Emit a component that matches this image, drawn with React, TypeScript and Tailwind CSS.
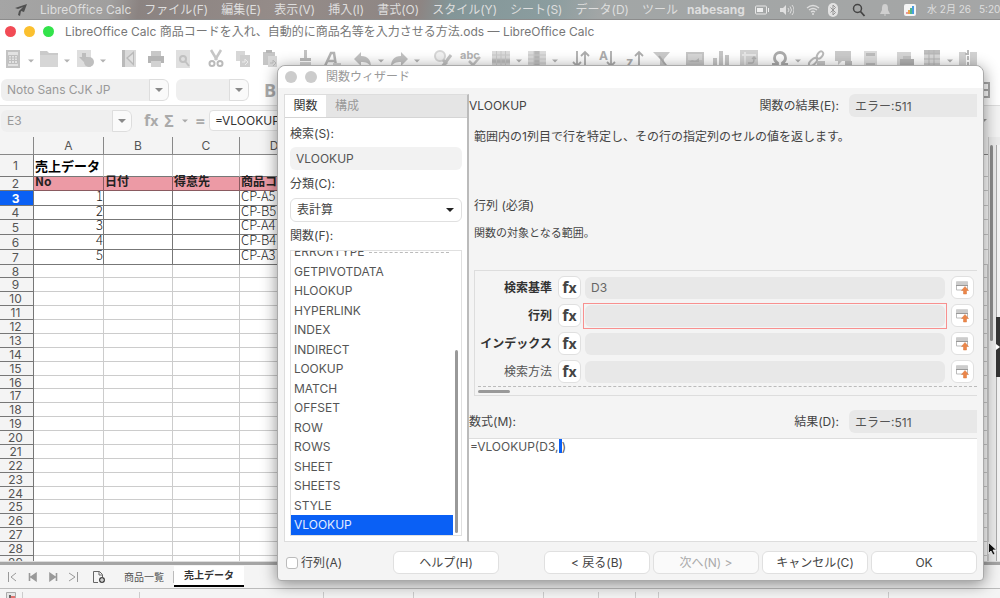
import { FC, ReactNode } from "react";
import clsx from "clsx";

const menus = ["ファイル(F)", "編集(E)", "表示(V)", "挿入(I)", "書式(O)", "スタイル(Y)", "シート(S)", "データ(D)", "ツール"];

const functionNames = [
    "ERRORTYPE", "GETPIVOTDATA", "HLOOKUP", "HYPERLINK", "INDEX", "INDIRECT", "LOOKUP", "MATCH",
    "OFFSET", "ROW", "ROWS", "SHEET", "SHEETS", "STYLE", "VLOOKUP",
];

const args = [
    { id: "arg-key", label: "検索基準", value: "D3", required: true },
    { id: "arg-matrix", label: "行列", value: "", required: true, active: true },
    { id: "arg-index", label: "インデックス", value: "", required: true },
    { id: "arg-sorted", label: "検索方法", value: "" },
];

const products = ["CP-A5", "CP-B5", "CP-A4", "CP-B4", "CP-A3"];

const icons: Record<string, ReactNode> = {
    new: <><path d="M2 0h14v18H2z" fill="#b5b5b5" /><path d="M4 2h10v14H4z" fill="#dcdcdc" /><path d="M4.500 5.500h9v8h-9zM4.500 8h9M4.500 10.500h9M7.500 5.500v8M10.500 5.500v8" fill="none" stroke="#b0b0b0" /></>,
    open: <><path d="M0 3V1h7l2 2h9v14H0z" fill="#bdbdbd" /><path d="M0 5h18v12H0z" fill="#cdcdcd" /></>,
    save: <><path d="M1 0h14v17H1z" fill="#d6d6d6" /><path d="M6 3h4v4h3l-5 5-5-5h3z" fill="#adadad" /><circle cx="13" cy="12" r="5" fill="#b0b0b0" /></>,
    edit: <><path d="M2 0h14v17H2z" fill="#d2d2d2" /><path d="M2 0h3v17H2zM14 1L6 8l8 8z" fill="#aaa" /><path d="M13 4L8 8l5 5z" fill="#dadada" /></>,
    print: <><path d="M4 1h10v5H4z" fill="#bbb" /><path d="M1 6h16v7H1z" fill="#a3a3a3" /><path d="M4 11h10v6H4z" fill="#c8c8c8" /></>,
    preview: <><path d="M2 0h14v18H2z" fill="#d8d8d8" /><circle cx="9" cy="9" r="3" fill="none" stroke="#b2b2b2" strokeWidth="2" /><path d="M11 11l4 5" stroke="#b2b2b2" strokeWidth="2" /></>,
    cut: <><path d="M4 0l6 10M14 0L8 10" stroke="#b8b8b8" strokeWidth="2.500" /><circle cx="5" cy="13.500" r="2.500" fill="none" stroke="#aaa" strokeWidth="2" /><circle cx="13" cy="13.500" r="2.500" fill="none" stroke="#aaa" strokeWidth="2" /></>,
    copy: <><path d="M2 1h9v10H2z" fill="#cecece" /><path d="M6 5h10v12H6z" fill="#c3c3c3" /><path d="M8 12h3V9l3 3-3 3" fill="none" stroke="#e6e6e6" /></>,
    paste: <><path d="M2 2h12v13H2z" fill="#b9b9b9" /><path d="M5 0h6v3H5z" fill="#a5a5a5" /><path d="M7 6h9v11H7z" fill="#cfcfcf" /><path d="M9 13h3v-3l3 3-3 3" fill="none" stroke="#a8a8a8" /></>,
    brush: <><path d="M8 0h3v8H8z" fill="#b5b5b5" /><path d="M4 8h11v3H4z" fill="#aaa" /><path d="M4 12h11v6H4z" fill="#c8c8c8" /></>,
    clear: <><path d="M2 16L8 3h3l2 13M5 11h7" fill="none" stroke="#a3a3a3" strokeWidth="2.500" /><path d="M10 13h8v5h-8z" fill="#c9c9c9" /></>,
    undo: <path d="M0 9l7-7v4c7 0 10 4 10 11-2-4-5-5-10-5v4z" fill="#b4b4b4" />,
    redo: <path d="M18 9l-7-7v4C4 6 1 10 1 17c2-4 5-5 10-5v4z" fill="#b4b4b4" />,
    find: <><circle cx="6" cy="6" r="5" fill="#eee" stroke="#ccc" strokeWidth="2" /><path d="M9 10l4 4M17 5L8 17" stroke="#b5b5b5" strokeWidth="3" /></>,
    spell: <><text x="-1" y="9" fontSize="11" fontWeight="700" fill="#a0a0a0">abc</text><path d="M8 11l4 4 7-8" fill="none" stroke="#b5b5b5" strokeWidth="2.500" /></>,
    rows: <><path d="M0 1h18v16H0z" fill="#d4d4d4" /><path d="M0 9h18v4H0z" fill="#aaa" /><path d="M0 5h18M0 9h18M0 13h18M4.500 1v16M9 1v16M13.500 1v16" stroke="#bbb" /></>,
    columns: <><path d="M0 1h18v16H0z" fill="#d4d4d4" /><path d="M6 1h5v16H6z" fill="#aaa" /><path d="M0 5h18M0 9h18M0 13h18M6 1v16M11.500 1v16" stroke="#bbb" /></>,
    sort: <path d="M5 1v15M1 12l4 4 4-4M13 17V2M9 6l4-4 4 4" fill="none" stroke="#999" strokeWidth="1.800" />,
    sortAsc: <><text x="0" y="10" fontSize="12" fontWeight="700" fill="#999">A</text><path d="M12 1v15M8 12l4 4 4-4" fill="none" stroke="#999" strokeWidth="1.800" /></>,
    sortDesc: <><text x="0" y="17" fontSize="13" fontWeight="700" fill="#999">z</text><path d="M13 17V2M9 6l4-4 4 4" fill="none" stroke="#999" strokeWidth="1.800" /></>,
    filter: <><path d="M0 2h17l-6 7v9H7V9z" fill="#bdbdbd" /><path d="M6 6l9 12" stroke="#999" strokeWidth="2" /></>,
    image: <><path d="M0 2h18v14H0z" fill="#b8b8b8" /><path d="M2 4h14v6H2z" fill="#cecece" /><path d="M3 12l3-2 3 1 4-3v4z" fill="#a5a5a5" /></>,
    chart: <path d="M0 8h4v10H0zM6 1h4v17H6zM12 5h4v13h-4z" fill="#b8b8b8" />,
    pivot: <><path d="M0 0h18v18H0z" fill="#c8c8c8" /><path d="M2 5h14M5 2v14" stroke="#e0e0e0" strokeWidth="2" /><path d="M8 13h4c2 0 2-2 2-5M12 9l2-2 2 2" fill="none" stroke="#a0a0a0" strokeWidth="1.500" /></>,
    omega: <path d="M1 14.500h5.500V13C4 11.500 3.500 10 3.500 8a5.500 5.500 0 0 1 11 0c0 2-.5 3.500-3 5v1.500H17" fill="none" stroke="#989898" strokeWidth="2.800" />,
    link: <><ellipse cx="13" cy="5" rx="2.500" ry="4" transform="rotate(35 13 5)" fill="none" stroke="#aaa" strokeWidth="2" /><ellipse cx="6" cy="12" rx="2.500" ry="5" transform="rotate(45 6 12)" fill="none" stroke="#aaa" strokeWidth="2" /><path d="M10 11h8v6h-8z" fill="#b9b9b9" /></>,
    comment: <><path d="M1 1h16v10H8l-4 4v-4H1z" fill="#bfbfbf" /><path d="M11 11h7v6h-7z" fill="#adadad" /></>,
    header: <><path d="M3 1h13v17H3z" fill="#d4d4d4" /><path d="M5 3h9v3H5zM5 13h9v4H5z" fill="#acacac" /></>,
    printArea: <><path d="M1 2h14v14H1z" fill="#ccc" /><path d="M4 9h14v6H4z" fill="#a0a0a0" /><path d="M7 6h8v3H7z" fill="#b5b5b5" /></>,
    freeze: <><path d="M1 0h16v18H1z" fill="#d2d2d2" /><path d="M1 0h16v4H1z" fill="#b0b0b0" /><path d="M1 4h16M1 9h16M1 14h16M6 0v18M11 0v18" stroke="#a5a5a5" /></>,
    split: <><path d="M0 2h7v16H0zM11 2h7v16h-7z" fill="#c8c8c8" /><path d="M9 0v18M6 4h6" stroke="#aaa" strokeWidth="2" strokeDasharray="4 2" /></>,
};

const toolGroups = [
    { space: "ml-1", items: ["new+", "open+", "save+"] },
    { space: "ml-2", items: ["edit", "print", "preview"] },
    { space: "ml-1.5", items: ["cut", "copy", "paste"] },
    { space: "ml-2", items: ["brush", "clear"] },
    { space: "ml-1", items: ["undo+", "redo+"] },
    { space: "ml-2", items: ["find", "spell"] },
    { space: "ml-1", items: ["rows+", "columns+"] },
    { space: "ml-2", items: ["sort", "sortAsc", "sortDesc", "filter"] },
    { space: "ml-1.5", items: ["image", "chart", "pivot"] },
    { space: "ml-1", items: ["omega+", "link", "comment", "header"] },
    { space: "ml-2", items: ["printArea", "freeze+", "split"] },
];

const Caret: FC<{ className?: string }> = ({ className }) => (
    <svg viewBox="0 0 8 4" className={clsx("h-1 fill-current", className ?? "w-2")}><path d="M0 0h8L4 4z" /></svg>
);

const Fx: FC<{ className?: string }> = ({ className }) => (
    <span className={clsx("font-['Open_Sans'] leading-4 font-bold", className)}>
        f<span className="text-sm leading-4">x</span>
    </span>
);

const MenuBar = () => (
    <div className="flex h-5 shrink-0 items-center border-b border-[#8c8c8c] bg-[linear-gradient(100deg,#a5a5a5_0%,#a09f9e_11%,#8b8381_14%,#958c89_28%,#8d8583_42%,#839698_45%,#8b9d9f_55%,#a2a6a6_60%,#a5a6a6_100%)] text-xs text-[#dedede]">
        <svg viewBox="0 0 14 14" className="ml-3.5 h-3.5 w-3.5 shrink-0 fill-[#505050]">
            <path d="M1 5L13 1l-3 8-3-1-1 5-2-1 1-4 4-4-5 2z" />
        </svg>
        <nav className="ml-3 flex min-w-0 flex-1 gap-[13px] overflow-hidden whitespace-nowrap">
            <a href="#app">LibreOffice Calc</a>
            {menus.map((menu) => <a key={menu} href="#menu">{menu}</a>)}
        </nav>
        <div className="ml-2 flex w-[313px] shrink-0 items-center overflow-hidden whitespace-nowrap">
            <span className="w-[68px] shrink-0 font-bold">nabesang</span>
            <svg viewBox="0 0 14 10" className="h-2.5 w-3.5 shrink-0"><rect x=".5" y="1" width="11" height="8" rx="1" fill="none" stroke="#e6e6e6" /><path d="M2 3h6v4H2zM13 3h1v4h-1z" fill="#eee" /></svg>
            <svg viewBox="0 0 14 12" className="ml-[11px] h-3 w-3.5 shrink-0"><path d="M0 4h3l3-3v10L3 8H0z" fill="#e0e0e0" /><path d="M8 4q2 2 0 4M10 2.500q3 3.500 0 7M12 1q4 5 0 10" fill="none" stroke="#ddd" /></svg>
            <svg viewBox="0 0 14 11" className="ml-3 h-[11px] w-3.5 shrink-0"><path d="M1 4q6-5 12 0M3 6q4-3 8 0M5 8q2-1.500 4 0" fill="none" stroke="#ddd" strokeWidth="1.300" /><circle cx="7" cy="10" r="1" fill="#ddd" /></svg>
            <svg viewBox="0 0 10 14" className="ml-2 h-3.5 w-2.5 shrink-0"><rect width="10" height="14" rx="5" fill="#e2e2e2" /><path d="M2.500 4.500l5 5L5 12V2l2.500 2.500-5 5" fill="none" stroke="#959595" /></svg>
            <svg viewBox="0 0 14 14" className="ml-3.5 h-3.5 w-3.5 shrink-0"><circle cx="5.500" cy="5.500" r="4" fill="none" stroke="#444" strokeWidth="1.500" /><path d="M8.500 8.500l4 4.500" stroke="#444" strokeWidth="1.800" /></svg>
            <svg viewBox="0 0 10 12" className="ml-3.5 h-3 w-2.5 shrink-0 fill-[#cfcfcf]"><path d="M5 0c3 0 3 3 3 6l2 4H0l2-4c0-3 0-6 3-6zM4 10.500h2v1H4z" /></svg>
            <svg viewBox="0 0 12 12" className="ml-3.5 h-3 w-3 shrink-0"><rect width="12" height="12" rx="2" fill="#f5f5f5" /><path d="M2 8h2v2H2z" fill="#e99" /><path d="M4 6h2v4H4z" fill="#e9a44a" /><path d="M6 4h2v6H6z" fill="#4db88a" /><path d="M8 2h2v8H8z" fill="#4a9be0" /></svg>
            <span className="ml-[11px] text-[10px]">水 2月 26</span>
            <span className="ml-2 text-[10px]">5:20 午</span>
        </div>
    </div>
);

const Toolbar = () => (
    <div className="flex h-[32px] shrink-0 items-center overflow-hidden">
        {toolGroups.map((group, i) => (
            <div key={i} className={clsx("flex shrink-0 opacity-80", group.space)}>
                {group.items.map((item) => {
                    const name = item.replace("+", "");
                    return (
                        <button key={item} aria-label={name} className={clsx("flex items-center", !item.includes("+") && "pr-[9px]")}>
                            <svg viewBox="0 0 18 18" className="h-[18px] w-[18px] overflow-visible">{icons[name]}</svg>
                            {item.includes("+") && <span className="flex w-[18px] justify-center pt-1 text-[#a0a0a0]"><Caret className="w-1.5" /></span>}
                        </button>
                    );
                })}
            </div>
        ))}
    </div>
);

interface ComboProps {
    label: string;
    value: string;
    width: string;
}

const Combo: FC<ComboProps> = ({ label, value, width }) => (
    <div className={clsx("flex h-[22px] shrink-0 overflow-hidden rounded-md bg-[#efefef]", width)}>
        <input aria-label={label} defaultValue={value} className="min-w-0 flex-1 bg-transparent pl-1.5 text-xs text-[#999] outline-none" />
        <button aria-label={label + "▼"} className="flex w-5 items-center justify-center rounded-r-md border border-[#ddd] bg-[#fafafa] text-[#8a8a8a]"><Caret /></button>
    </div>
);

const RowHead: FC<{ n: number; selected?: boolean }> = ({ n, selected }) => (
    <th className={clsx("border-r border-b border-[#777] pt-px pr-0.5 text-xs leading-2.5", selected ? "bg-[#0a60f5] font-bold text-white" : "bg-[#f4f4f4] font-normal text-[#555]")}>{n}</th>
);

const Sheet = () => (
    <div className="flex min-h-0 flex-1 overflow-hidden border-b border-[#ddd] bg-white">
        <div className="min-w-0 flex-1 overflow-hidden">
            <table className="w-full table-fixed border-separate border-spacing-0">
                <colgroup>
                    <col className="w-[34px]" /><col className="w-[70px]" /><col className="w-[69px]" /><col className="w-[67px]" /><col className="w-[69px]" /><col />
                </colgroup>
                <thead>
                    <tr className="h-[18px] bg-[#f4f4f4] text-xs leading-3 text-[#555]">
                        <th className="border-r border-b border-[#888]"></th>
                        {["A", "B", "C", "D"].map((c) => <th key={c} className="border-r border-b border-[#888] p-0 font-normal">{c}</th>)}
                        <th className="border-b border-[#888] p-0"></th>
                    </tr>
                </thead>
                <tbody>
                    <tr className="h-[22px]">
                        <RowHead n={1} />
                        <td className="border-r border-b border-r-[#ccc] border-b-[#777] p-0 pl-px font-['Noto_Sans_CJK_JP'] text-[13px] leading-4 font-bold whitespace-nowrap text-black">売上データ</td>
                        <td className="border-r border-b border-r-[#ccc] border-b-[#777]"></td>
                        <td className="border-r border-b border-r-[#ccc] border-b-[#777]"></td>
                        <td className="border-r border-b border-r-[#ccc] border-b-[#777]"></td>
                        <td className="border-b border-[#ccc]"></td>
                    </tr>
                    <tr className="h-[14px]">
                        <RowHead n={2} />
                        {["No", "日付", "得意先", "商品コード"].map((h) => (
                            <td key={h} className="border-r border-b border-[#8a5a60] bg-[#ec9aa5] p-0 pb-1 pl-px align-top font-['Noto_Sans_CJK_JP'] text-xs leading-2 font-bold whitespace-nowrap text-[#222]">{h}</td>
                        ))}
                        <td className="border-b border-[#ccc] p-0"></td>
                    </tr>
                    {products.map((code, i) => (
                        <tr key={code} className={i === 1 ? "h-[14px]" : "h-[15px]"}>
                            <RowHead n={i + 3} selected={i === 0} />
                            <td className="border-r border-b border-[#777] p-0 text-right align-top font-['Noto_Sans_CJK_JP'] text-[13px] leading-2.5 font-light text-[#222]">{i + 1}</td>
                            <td className="border-r border-b border-[#777]"></td>
                            <td className="border-r border-b border-[#777]"></td>
                            <td className="border-r border-b border-[#777] p-0 pl-px align-top font-['Noto_Sans_CJK_JP'] text-[13px] leading-2.5 font-light text-[#222]">{code}</td>
                            <td className="border-b border-[#ccc] p-0"></td>
                        </tr>
                    ))}
                    {Array.from({ length: 22 }, (_, i) => i + 8).map((n) => (
                        <tr key={n} className={n % 8 === 0 ? "h-[13px]" : "h-[14px]"}>
                            <RowHead n={n} />
                            {[0, 1, 2, 3, 4].map((c) => <td key={c} className="border-r border-b border-[#ccc] p-0"></td>)}
                        </tr>
                    ))}
                </tbody>
            </table>
        </div>
        <div className="flex w-3 shrink-0 justify-between border-l border-[#ccc] bg-[#ececec] pt-2">
            <div className="ml-px h-[196px] w-[3px] rounded-full bg-[#8c8c8c]" />
            <div className="w-1 border-l border-[#aaa] bg-[#f4f4f4]" />
        </div>
    </div>
);

const SheetTabs = () => (
    <>
        <div className="h-[3px] shrink-0 bg-[#a5a5a5]" />
        <div className="flex h-6 shrink-0 items-center border-b border-[#bbb] bg-[#f4f4f4] text-[10px] text-[#555]">
            <svg viewBox="0 0 72 10" className="ml-2 h-2.5 w-[72px] fill-[#999] stroke-[#999]">
                <path d="M.5 0v10M8 1L3 5l5 4" fill="none" />
                <path d="M21.500 1v8M28 1.500v7L23 5z" strokeWidth="1.600" />
                <path d="M48.500 1v8M42 1.500v7L47 5z" strokeWidth="1.600" />
                <path d="M61 1l6 4-6 4M69.500 0v10" fill="none" />
            </svg>
            <button aria-label="シートを追加" className="ml-[13px]">
                <svg viewBox="0 0 12 12" className="h-3 w-3"><path d="M5 11.500H.5V.5h6l3 3V6M6 .5V4h3" fill="none" stroke="#666" /><circle cx="9" cy="9" r="3" fill="#444" /><path d="M7 9h4M9 7v4" stroke="#fff" /></svg>
            </button>
            <button className="ml-2.5 border-r border-[#bbb] px-[9px] leading-3">商品一覧</button>
            <button className="h-[21px] border-b-2 border-black bg-white px-2.5 font-bold text-[#333]">売上データ</button>
        </div>
        <div className="flex h-[9px] shrink-0 items-end overflow-hidden bg-[#f4f4f4]">
            <div className="flex h-1.5 w-[23px] justify-center border-r border-[#ccc]">
                <svg viewBox="0 0 10 6" className="h-1.5 w-2.5"><path d="M.5 6V.5h9V6" fill="#e6e6e6" stroke="#aaa" /><path d="M3 3h2v3H3z" fill="#666" /><path d="M5 4h4v2H5z" fill="#e0736f" /></svg>
            </div>
            <div className="h-1.5 w-[117px] border-r border-[#ccc]" />
            <div className="h-1.5 w-[184px] border-r border-[#ccc]" />
            <div className="h-1.5 w-[90px] border-r border-[#ccc]" />
            <div className="h-1.5 w-[130px] border-r border-[#ccc]" />
            <div className="h-1.5 w-[55px] border-r border-[#ccc]" />
            <div className="h-1.5 w-[37px] border-r border-[#ccc]" />
            <div className="h-1.5 w-[23px] border-r border-[#ccc]" />
            <div className="h-1.5 w-[230px] border-r border-[#ccc]" />
        </div>
    </>
);

const FunctionPanel = () => (
    <div className="flex w-[185px] shrink-0 flex-col border border-r-2 border-[#ddd] border-r-[#bbb] bg-white">
        <div className="flex h-[23px] border-b border-[#d5d5d5] bg-[#e5e5e5]">
            <button className="w-[41px] bg-white text-[#333]">関数</button>
            <button className="px-[9px] text-[#999]">構成</button>
        </div>
        <div className="flex min-h-0 flex-1 flex-col px-[5px] pt-1.5 pb-[5px]">
            <label htmlFor="search" className="leading-5">検索(S):</label>
            <input id="search" defaultValue="VLOOKUP" className="mt-[3px] h-[23px] w-full rounded-md bg-[#f2f2f2] px-1.5 text-[#555] outline-none" />
            <label htmlFor="category" className="mt-1 leading-5">分類(C):</label>
            <div className="relative mt-1">
                <select id="category" className="h-6 w-full appearance-none rounded-md border border-[#e0e0e0] bg-white px-1.5">
                    <option>表計算</option>
                </select>
                <Caret className="pointer-events-none absolute top-2.5 right-2 w-2 text-[#222]" />
            </div>
            <span id="list-label" className="mt-1 leading-5">関数(F):</span>
            <div className="mt-1 flex min-h-0 flex-1 overflow-hidden border border-[#e0e0e0]">
                <ul role="listbox" aria-labelledby="list-label" className="flex min-w-0 flex-1 flex-col justify-end">
                    {functionNames.map((name, i) => (
                        <li
                            key={name}
                            role="option"
                            aria-selected={name === "VLOOKUP"}
                            className={clsx("flex shrink-0 items-center pl-[3px]", i % 2 ? "h-[19px]" : "h-5", name === "VLOOKUP" ? "bg-[#0a60f5] text-[#e4ecff]" : "text-[#555]")}
                        >
                            {name}
                            {i === 0 && <span className="mr-1 ml-1 flex-1 border-t border-dashed border-[#bbb]" />}
                        </li>
                    ))}
                </ul>
                <div className="flex w-2 flex-col justify-end pb-0.5 pl-0.5">
                    <div className="h-[183px] w-[3px] rounded-full bg-[#999]" />
                </div>
            </div>
        </div>
    </div>
);

const ShrinkIcon = () => (
    <svg viewBox="0 0 14 14" className="h-3.5 w-3.5">
        <path d="M.5 1h11v8H.5z" fill="#fff" stroke="#bbb" />
        <path d="M0 .5h12v4H0z" fill="#ccc" />
        <path d="M0 4.500h12" stroke="#999" />
        <path d="M9 5.500l3.500 4h-2V13h-3V9.500h-2z" fill="#ec8548" stroke="#d9793f" strokeWidth=".5" />
    </svg>
);

const Arguments = () => (
    <div className="ml-[5px] border border-r-0 border-[#ddd] pt-[5px] pb-0.5">
        <div className="flex flex-col gap-[5px]">
            {args.map((arg) => (
                <div key={arg.id} className="flex h-[23px] items-center pr-[3px]">
                    <label htmlFor={arg.id} className={clsx("w-[77px] shrink-0 text-right whitespace-nowrap", arg.required ? "font-bold text-[#333]" : "text-[#555]")}>{arg.label}</label>
                    <button aria-label={arg.label + " fx"} className="ml-1.5 flex h-[23px] w-[23px] shrink-0 items-center justify-center rounded-md border border-[#e0e0e0] bg-white text-[#444]"><Fx className="text-base" /></button>
                    <div className={clsx("ml-0.5 min-w-0 flex-1 border p-px", arg.active ? "border-[#f8908f]" : "border-transparent")}>
                        <input id={arg.id} defaultValue={arg.value} className="block h-[22px] w-full rounded-md bg-[#e8e8e8] px-1.5 text-[#666] outline-none" />
                    </div>
                    <button aria-label={arg.label + " 縮小"} className="ml-1 flex h-[23px] w-[23px] shrink-0 items-center justify-center rounded-md border border-[#e0e0e0] bg-white"><ShrinkIcon /></button>
                </div>
            ))}
        </div>
        <div className="mt-[3px] ml-[3px] border-t border-dashed border-[#bbb]" />
        <div className="mt-[3px] ml-[3px] h-[3px] w-8 rounded-full bg-[#999]" />
    </div>
);

const ResultField: FC<{ id: string; label: string }> = ({ id, label }) => (
    <>
        <label htmlFor={id} className="ml-auto">{label}</label>
        <input id={id} readOnly value="エラー:511" className="ml-2.5 h-[23px] w-32 rounded-l-md bg-[#e8e8e8] px-1.5 text-[#555] outline-none" />
    </>
);

const buttonStyle = "h-[23px] w-[106px] rounded-md border border-[#e0e0e0]";

const FunctionWizard = () => (
    <div role="dialog" aria-label="関数ウィザード" className="absolute top-[65px] right-4 left-[277px] rounded-t-lg rounded-b-sm border border-[#aaa] bg-[#f4f4f4] text-xs text-[#444] shadow-[0_3px_16px_rgba(0,0,0,0.45)]">
        <div className="flex h-[22px] items-center gap-2 rounded-t-lg bg-white pl-[7px] text-[#999]">
            <span className="h-3 w-3 rounded-full bg-[#ccc]" />
            <span className="h-3 w-3 rounded-full bg-[#ccc]" />
            <h2 className="ml-px">関数ウィザード</h2>
        </div>
        <div className="flex h-[454px] pt-1.5 pr-1.5 pl-1.5">
            <FunctionPanel />
            <div className="flex min-w-0 flex-1 flex-col">
                <div className="flex h-[23px] items-center">
                    <span>VLOOKUP</span>
                    <ResultField id="function-result" label="関数の結果(E):" />
                </div>
                <p className="mt-2.5 ml-[5px] h-[69px] leading-5">範囲内の1列目で行を特定し、その行の指定列のセルの値を返します。</p>
                <p className="ml-[5px] leading-5">行列 (必須)</p>
                <p className="mt-[7px] mb-[27px] ml-[5px] text-[11px] leading-5">関数の対象となる範囲。</p>
                <Arguments />
                <div className="mt-3.5 flex h-[23px] items-center">
                    <label htmlFor="formula">数式(M):</label>
                    <ResultField id="result" label="結果(D):" />
                </div>
                <div className="relative mt-[5px] min-h-0 flex-1">
                    <textarea id="formula" defaultValue="=VLOOKUP(D3, )" className="h-full w-full resize-none border-y border-[#ddd] bg-white pl-px leading-4 text-[#555] outline-none" />
                    <span className="absolute top-px left-[90px] h-3.5 w-[3px] bg-[#0a60f5]" />
                </div>
            </div>
        </div>
        <div className="flex items-center px-1.5 pt-[9px] pb-1.5 whitespace-nowrap">
            <div className="flex w-[109px] items-center gap-[3px] pl-0.5">
                <input id="array" type="checkbox" className="h-3 w-3 appearance-none rounded-[3px] border border-[#bbb] bg-white" />
                <label htmlFor="array">行列(A)</label>
            </div>
            <button className={clsx(buttonStyle, "bg-white")}>ヘルプ(H)</button>
            <div className="ml-auto flex gap-[3px]">
                <button className={clsx(buttonStyle, "bg-white")}>&lt; 戻る(B)</button>
                <button disabled className={clsx(buttonStyle, "bg-[#fafafa] text-[#aaa]")}>次へ(N) &gt;</button>
                <button className={clsx(buttonStyle, "bg-white")}>キャンセル(C)</button>
                <button className={clsx(buttonStyle, "bg-white")}>OK</button>
            </div>
        </div>
    </div>
);

export default function App() {
    return (
        <div className="relative flex h-screen flex-col overflow-hidden bg-white font-[Inter,'Noto_Sans_CJK_JP',sans-serif]">
            <MenuBar />
            <div className="flex h-[23px] shrink-0 items-center gap-2 pl-[5px]">
                <span className="h-[11px] w-[11px] rounded-full bg-[#f24b55]" />
                <span className="h-[11px] w-[11px] rounded-full bg-[#fbc02f]" />
                <span className="h-[11px] w-[11px] rounded-full bg-[#33e34b]" />
                <h1 className="ml-[3px] text-xs text-[#777]">LibreOffice Calc 商品コードを入れ、自動的に商品名等を入力させる方法.ods — LibreOffice Calc</h1>
            </div>
            <Toolbar />
            <div className="flex h-[31px] shrink-0 items-center gap-[7px] border-b border-[#ddd] pl-px">
                <Combo label="フォント名" value="Noto Sans CJK JP" width="w-[168px]" />
                <Combo label="フォントサイズ" value="" width="w-[73px]" />
                <button className="ml-2 font-['Open_Sans'] text-lg font-bold text-[#aaa]">B</button>
                <svg viewBox="0 0 16 16" className="mr-2.5 ml-auto h-4 w-4"><path d="M1 1h14v14H1zM1 8h14M8 1v14" fill="none" stroke="#aaa" strokeWidth="2" /></svg>
            </div>
            <div className="flex h-[31px] shrink-0 items-center bg-[#f4f4f4] pr-[13px] pb-0.5 pl-px">
                <Combo label="名前ボックス" value="E3" width="w-[131px]" />
                <Fx className="ml-3 text-base text-[#aaa]" />
                <span className="ml-1.5 font-['Open_Sans'] text-base leading-4 font-bold text-[#aaa]">Σ</span>
                <Caret className="ml-2 w-1.5 text-[#aaa]" />
                <span className="ml-2 font-['Open_Sans'] text-base leading-4 font-bold text-[#aaa]">=</span>
                <input aria-label="数式" defaultValue="=VLOOKUP(D3,)" className="ml-1 h-[21px] min-w-0 flex-1 rounded-sm border border-[#e0e0e0] bg-white pl-[5px] text-xs text-[#333]" />
                <Caret className="ml-1 w-2 text-[#999]" />
            </div>
            <Sheet />
            <SheetTabs />
            <FunctionWizard />
            <div className="absolute top-[317px] right-0 flex h-[60px] w-1 items-center bg-[#333]">
                <svg viewBox="0 0 4 6" className="h-1.5 w-1 fill-white"><path d="M0 0l4 3-4 3z" /></svg>
            </div>
            <svg viewBox="0 0 9 14" className="absolute top-[542px] right-[3px] h-3.5 w-[9px]"><path d="M.5.5v11L3 9l2 4 2-1-2-4h3.500z" fill="#111" stroke="#fff" strokeWidth=".7" /></svg>
        </div>
    );
}
